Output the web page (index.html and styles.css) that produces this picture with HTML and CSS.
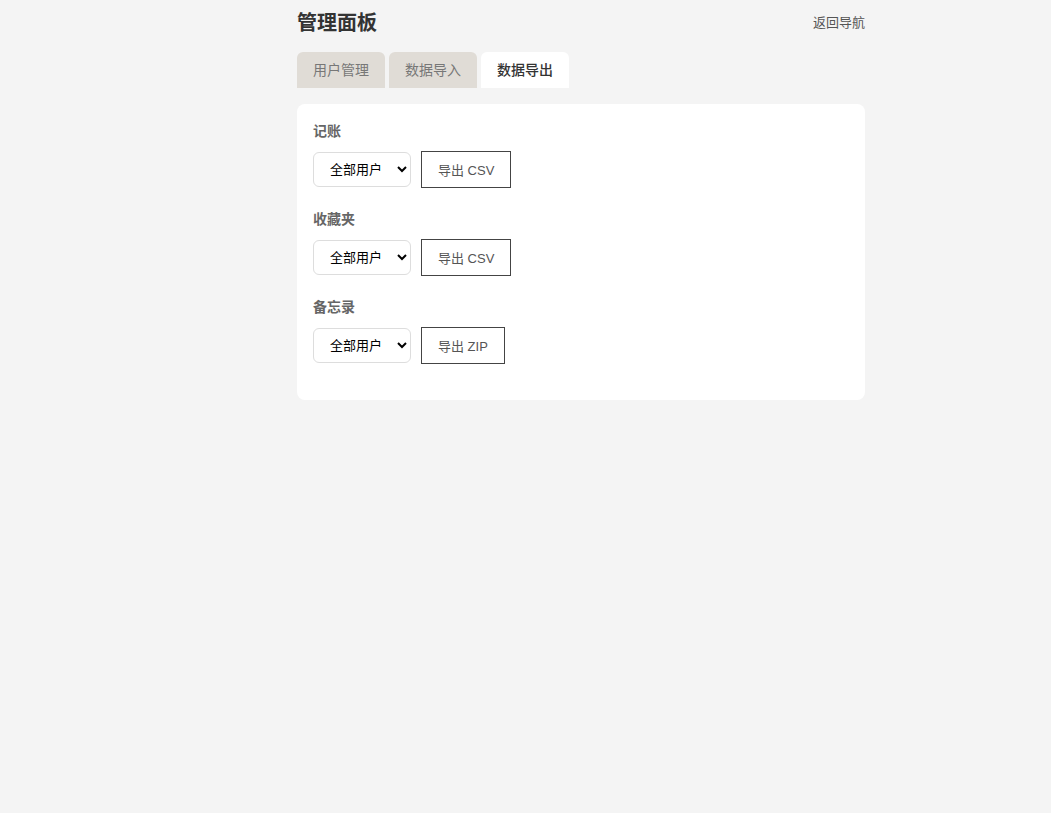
FILE: index.html
```html
<!doctype html>
<html lang="zh">
<head>
	<meta charset="utf-8">
	<title>管理面板</title>
	<link rel="stylesheet" href="styles.css">
</head>
<body>
	<div class="page">
		<div class="header">
			<h1 class="title">管理面板</h1>
			<a class="back" href="#">返回导航</a>
		</div>
		<div class="tabs">
			<div class="tab">用户管理</div>
			<div class="tab">数据导入</div>
			<div class="tab active">数据导出</div>
		</div>
		<div class="card">
			<div class="section">
				<div class="label">记账</div>
				<div class="row">
					<select class="user-select"><option>全部用户</option></select>
					<button class="export">导出 CSV</button>
				</div>
			</div>
			<div class="section">
				<div class="label">收藏夹</div>
				<div class="row">
					<select class="user-select"><option>全部用户</option></select>
					<button class="export">导出 CSV</button>
				</div>
			</div>
			<div class="section">
				<div class="label">备忘录</div>
				<div class="row">
					<select class="user-select"><option>全部用户</option></select>
					<button class="export">导出 ZIP</button>
				</div>
			</div>
		</div>
	</div>
</body>
</html>
```

FILE: styles.css
```css
body { margin: 0; background: #f4f4f4; color: #333;
	font-family: "Liberation Sans", "Noto Sans CJK SC", sans-serif; }
.page { width: 568px; margin-left: 297px; }

.header { display: flex; justify-content: space-between; align-items: center;
	height: 44px; padding-bottom: 1px; box-sizing: border-box; }
.title { margin: 0; font-size: 20px; font-weight: 700; color: #333; }
.back { font-size: 13px; color: #555; text-decoration: none; }

.tabs { display: flex; gap: 4px; margin-top: 8px; }
.tab { width: 88px; height: 36px; line-height: 36px; text-align: center;
	font-size: 14px; color: #777; background: #e0dcd6; border-radius: 6px 6px 0 0; }
.tab.active { background: #fff; color: #333; font-weight: 500; }

.card { background: #fff; border-radius: 8px; margin-top: 16px;
	padding: 16px 16px 16px; }
.section { margin-bottom: 20px; }
.label { font-size: 14px; font-weight: 700; color: #666; line-height: 22px;
	margin-bottom: 9px; }
.row { display: flex; align-items: center; gap: 10px; }
.user-select { width: 98px; height: 35px; font-size: 13px; color: #000;
	font-family: inherit; background: #fff; border: 1px solid #ddd;
	border-radius: 6px; padding: 0 4px 0 12px; }
.export { height: 37px; padding: 0 16px; font-size: 13px; color: #555;
	font-family: inherit; background: #fff; border: 1px solid #444; border-radius: 0; }
```
